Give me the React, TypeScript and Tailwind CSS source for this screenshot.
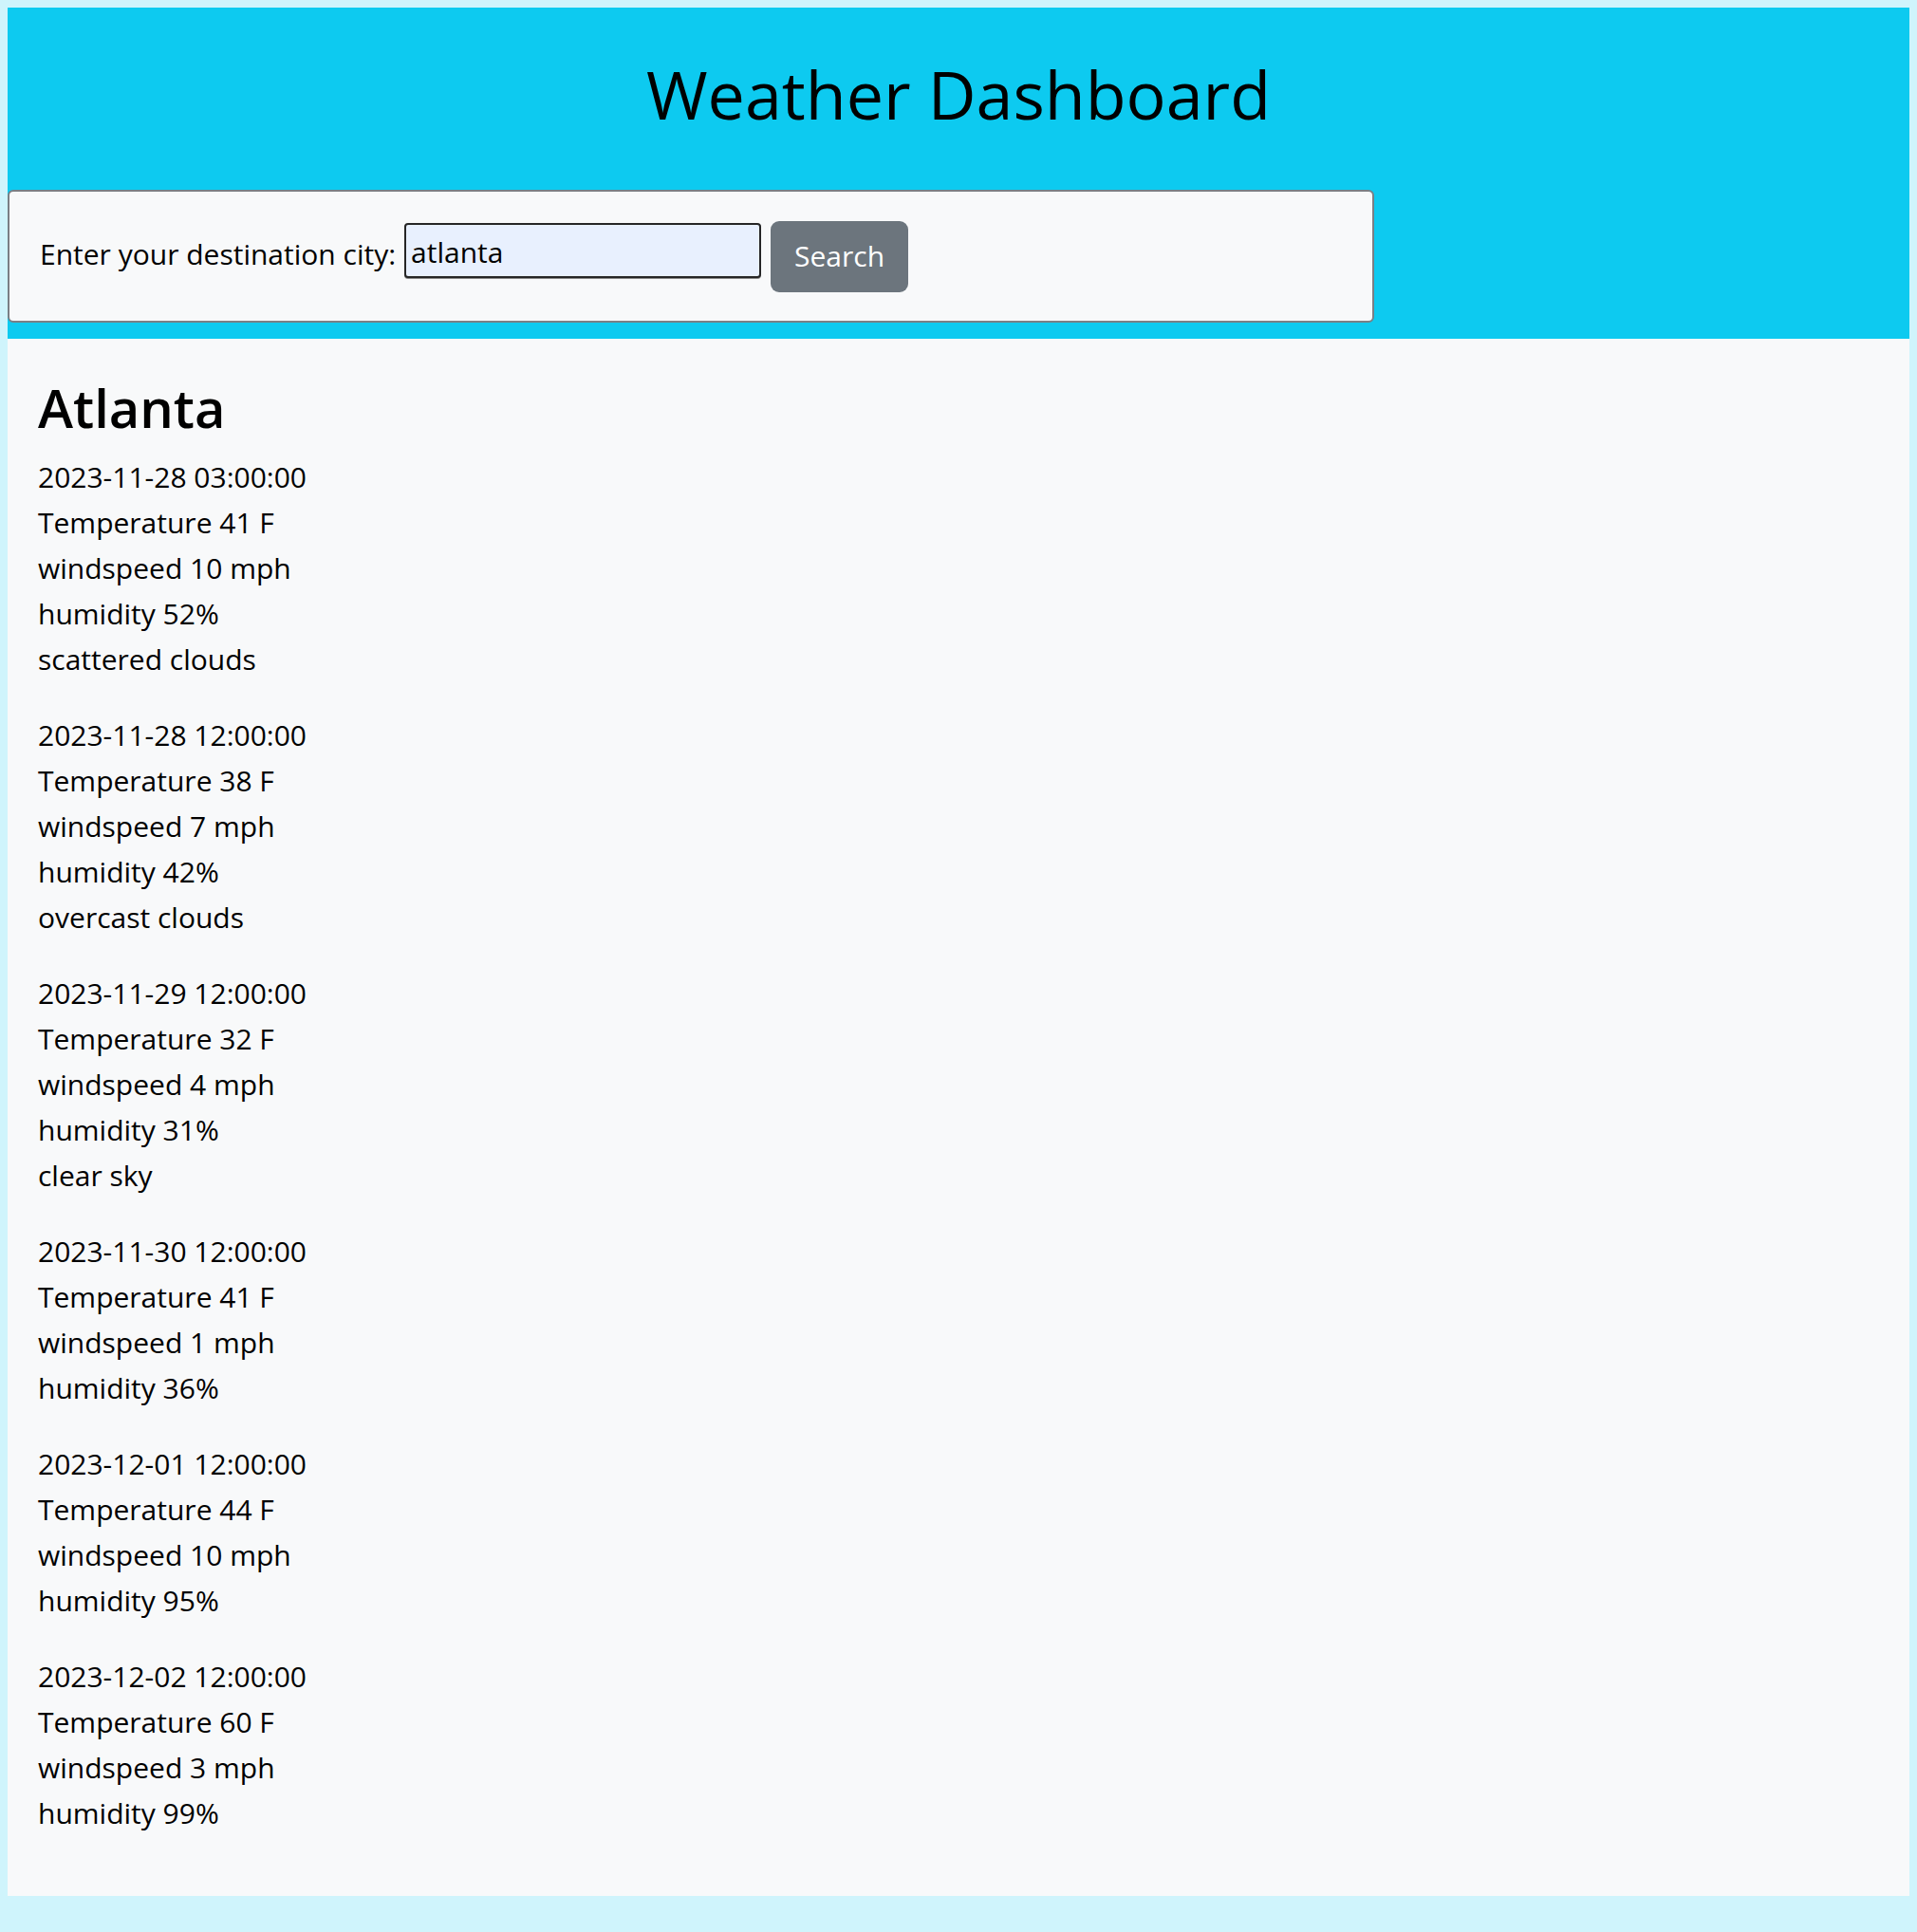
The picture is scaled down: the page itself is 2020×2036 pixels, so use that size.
import React from "react";

type Entry = { date: string; temp: number; wind: number; hum: number; desc?: string };

const entries: Entry[] = [
  { date: "2023-11-28 03:00:00", temp: 41, wind: 10, hum: 52, desc: "scattered clouds" },
  { date: "2023-11-28 12:00:00", temp: 38, wind: 7, hum: 42, desc: "overcast clouds" },
  { date: "2023-11-29 12:00:00", temp: 32, wind: 4, hum: 31, desc: "clear sky" },
  { date: "2023-11-30 12:00:00", temp: 41, wind: 1, hum: 36 },
  { date: "2023-12-01 12:00:00", temp: 44, wind: 10, hum: 95 },
  { date: "2023-12-02 12:00:00", temp: 60, wind: 3, hum: 99 },
];

export default function App() {
  return (
    <div
      className="min-h-[2036px] bg-[#cff4fc] p-2 text-black"
      style={{ fontFamily: '"Open Sans", "Noto Sans", sans-serif' }}
    >
      <header className="bg-[#0dcaf0] pt-[43px] pb-[17px]">
        <h1 className="text-center text-[70px] leading-[96px] font-normal text-black">
          Weather Dashboard
        </h1>
        <div className="mt-[53px] flex h-[140px] w-[1440px] items-center rounded-[6px] border-2 border-[#7a7f85] bg-[#f8f9fa] pl-[32px]">
          <label className="mb-[4px] text-[30px] leading-[48px]">Enter your destination city:</label>
          <div className="mb-[12px] ml-[9px] flex h-[58px] w-[376px] items-center rounded-[4px] border-2 border-[#262626] bg-[#e8f0fe] pl-[5px] text-[30px] leading-[48px] shadow-[0_1px_0_#8a8a8a]">
            <span className="translate-y-[2px]">atlanta</span>
          </div>
          <button className="ml-[10px] flex h-[75px] w-[145px] items-center justify-center rounded-[9px] bg-[#6c757d] text-[30px] leading-[48px] text-white">
            Search
          </button>
        </div>
      </header>
      <main className="bg-[#f8f9fa] px-[32px] pt-[37px] pb-[31px]">
        <h2 className="mb-[15px] text-[56px] leading-[70px] font-semibold">Atlanta</h2>
        {entries.map((e) => (
          <div key={e.date} className="mb-[32px] text-[30px] leading-[48px]">
            <div>{e.date}</div>
            <div>Temperature {e.temp} F</div>
            <div>windspeed {e.wind} mph</div>
            <div>humidity {e.hum}%</div>
            {e.desc && <div>{e.desc}</div>}
          </div>
        ))}
      </main>
    </div>
  );
}
